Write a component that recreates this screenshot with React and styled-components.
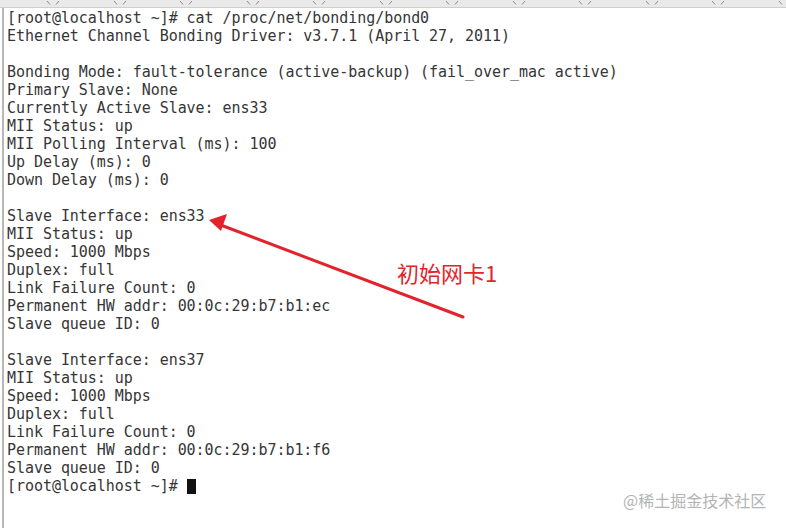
import React from "react";
import styled, { createGlobalStyle } from "styled-components";

const GlobalStyle = createGlobalStyle`
  html, body {
    margin: 0;
    padding: 0;
    background: #ffffff;
  }
`;

const lines = [
  "[root@localhost ~]# cat /proc/net/bonding/bond0",
  "Ethernet Channel Bonding Driver: v3.7.1 (April 27, 2011)",
  "",
  "Bonding Mode: fault-tolerance (active-backup) (fail_over_mac active)",
  "Primary Slave: None",
  "Currently Active Slave: ens33",
  "MII Status: up",
  "MII Polling Interval (ms): 100",
  "Up Delay (ms): 0",
  "Down Delay (ms): 0",
  "",
  "Slave Interface: ens33",
  "MII Status: up",
  "Speed: 1000 Mbps",
  "Duplex: full",
  "Link Failure Count: 0",
  "Permanent HW addr: 00:0c:29:b7:b1:ec",
  "Slave queue ID: 0",
  "",
  "Slave Interface: ens37",
  "MII Status: up",
  "Speed: 1000 Mbps",
  "Duplex: full",
  "Link Failure Count: 0",
  "Permanent HW addr: 00:0c:29:b7:b1:f6",
  "Slave queue ID: 0",
];

export default function App() {
  const marks = Array.from({ length: 12 }, (_, i) => i);
  return (
    <>
      <GlobalStyle />
      <Screen>
        <TopStrip>
          {marks.map((i) => (
            <Mark key={i} viewBox="0 0 14 6">
              <path d="M1 1 L4 4.5 M13 1 L10 4.5" />
            </Mark>
          ))}
        </TopStrip>
        <Terminal>
          {lines.map((l, i) => (
            <Line key={i}>{l || "\u00a0"}</Line>
          ))}
          <Line>
            [root@localhost ~]# <Cursor />
          </Line>
        </Terminal>

        <Arrow viewBox="0 0 786 528">
          <line x1="463" y1="317" x2="218" y2="224" />
          <polygon points="209,220 227,214 221,231" />
        </Arrow>
        <Label>初始网卡1</Label>
        <Watermark>@稀土掘金技术社区</Watermark>
      </Screen>
    </>
  );
}

const Screen = styled.div`
  position: relative;
  width: 786px;
  height: 528px;
  overflow: hidden;
  background: #ffffff;
  display: flex;
  flex-direction: column;
`;

const TopStrip = styled.div`
  height: 7px;
  background: #e9e9e9;
  border-bottom: 1px solid #cfcfcf;
  display: flex;
  align-items: flex-start;
  padding-left: 46px;
  gap: 52.5px;
  overflow: hidden;
`;

const Mark = styled.svg`
  flex: none;
  width: 14px;
  height: 6px;
  stroke: #8a8a8a;
  stroke-width: 1;
  fill: none;
`;

const Terminal = styled.div`
  flex: 1;
  margin-left: 2px;
  border-left: 2px solid #b8b8b8;
  padding: 1px 0 0 3px;
  font-family: "DejaVu Sans Mono", "Liberation Mono", monospace;
  font-size: 15px;
  letter-spacing: -0.05px;
  line-height: 18px;
  color: #363636;
  white-space: pre;
`;

const Line = styled.div`
  height: 18px;
  display: flex;
  align-items: center;
`;

const Cursor = styled.span`
  display: inline-block;
  width: 9px;
  height: 15px;
  background: #111111;
  margin-top: 1px;
`;

const Arrow = styled.svg`
  position: absolute;
  left: 0;
  top: 0;
  width: 786px;
  height: 528px;
  pointer-events: none;
  line {
    stroke: #e2232b;
    stroke-width: 3;
    stroke-linecap: round;
  }
  polygon {
    fill: #e2232b;
  }
`;

const Label = styled.div`
  position: absolute;
  left: 397px;
  top: 257px;
  font-family: "Noto Sans CJK SC", "Noto Sans", sans-serif;
  font-size: 22px;
  line-height: 30px;
  color: #e1252d;
`;

const Watermark = styled.div`
  position: absolute;
  left: 623px;
  top: 488px;
  font-family: "Noto Sans CJK SC", "Noto Sans", sans-serif;
  font-size: 16px;
  line-height: 24px;
  color: #b4b4b4;
`;
